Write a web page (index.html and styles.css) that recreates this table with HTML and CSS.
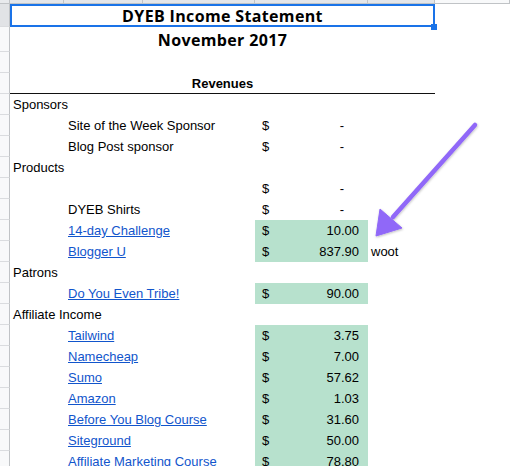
FILE: index.html
```html
<!DOCTYPE html>
<html>
<head>
<meta charset="utf-8">
<link rel="stylesheet" href="styles.css">
</head>
<body>
<div class="sheet">
  <div class="row hdr">
    <div class="rh corner"></div>
    <div class="ch sel"></div>
    <div class="ch sel"></div>
    <div class="ch sel"></div>
    <div class="ch sel"></div>
    <div class="ch sel"></div>
    <div class="ch"></div>
  </div>
  <div class="row r-title">
    <div class="rh selrow"></div>
    <div class="merged title">DYEB Income Statement</div>
    <div></div>
  </div>
  <div class="row r-month">
    <div class="rh"></div>
    <div class="merged title">November 2017</div>
    <div></div>
  </div>
  <div class="row">
    <div class="rh"></div>
  </div>
  <div class="row">
    <div class="rh"></div>
    <div class="merged rev">Revenues</div>
    <div></div>
  </div>
  <div class="row">
    <div class="rh"></div>
    <div class="b">Sponsors</div>
  </div>
  <div class="row">
    <div class="rh"></div><div></div>
    <div class="c">Site of the Week Sponsor</div>
    <div class="e"><span>$</span><span class="dash">-</span></div>
  </div>
  <div class="row">
    <div class="rh"></div><div></div>
    <div class="c">Blog Post sponsor</div>
    <div class="e"><span>$</span><span class="dash">-</span></div>
  </div>
  <div class="row">
    <div class="rh"></div>
    <div class="b">Products</div>
  </div>
  <div class="row">
    <div class="rh"></div><div></div><div class="c"></div>
    <div class="e"><span>$</span><span class="dash">-</span></div>
  </div>
  <div class="row">
    <div class="rh"></div><div></div>
    <div class="c">DYEB Shirts</div>
    <div class="e"><span>$</span><span class="dash">-</span></div>
  </div>
  <div class="row">
    <div class="rh"></div><div></div>
    <div class="c"><a href="#">14-day Challenge</a></div>
    <div class="e green"><span>$</span><span>10.00</span></div>
  </div>
  <div class="row">
    <div class="rh"></div><div></div>
    <div class="c"><a href="#">Blogger U</a></div>
    <div class="e green"><span>$</span><span>837.90</span></div>
    <div class="f">woot</div>
  </div>
  <div class="row">
    <div class="rh"></div>
    <div class="b">Patrons</div>
  </div>
  <div class="row">
    <div class="rh"></div><div></div>
    <div class="c"><a href="#">Do You Even Tribe!</a></div>
    <div class="e green"><span>$</span><span>90.00</span></div>
  </div>
  <div class="row">
    <div class="rh"></div>
    <div class="b wide">Affiliate Income</div>
  </div>
  <div class="row">
    <div class="rh"></div><div></div>
    <div class="c"><a href="#">Tailwind</a></div>
    <div class="e green"><span>$</span><span>3.75</span></div>
  </div>
  <div class="row">
    <div class="rh"></div><div></div>
    <div class="c"><a href="#">Namecheap</a></div>
    <div class="e green"><span>$</span><span>7.00</span></div>
  </div>
  <div class="row">
    <div class="rh"></div><div></div>
    <div class="c"><a href="#">Sumo</a></div>
    <div class="e green"><span>$</span><span>57.62</span></div>
  </div>
  <div class="row">
    <div class="rh"></div><div></div>
    <div class="c"><a href="#">Amazon</a></div>
    <div class="e green"><span>$</span><span>1.03</span></div>
  </div>
  <div class="row">
    <div class="rh"></div><div></div>
    <div class="c"><a href="#">Before You Blog Course</a></div>
    <div class="e green"><span>$</span><span>31.60</span></div>
  </div>
  <div class="row">
    <div class="rh"></div><div></div>
    <div class="c"><a href="#">Siteground</a></div>
    <div class="e green"><span>$</span><span>50.00</span></div>
  </div>
  <div class="row">
    <div class="rh"></div><div></div>
    <div class="c"><a href="#">Affiliate Marketing Course</a></div>
    <div class="e green"><span>$</span><span>78.80</span></div>
  </div>

  <div class="selection"><div class="handle"></div></div>
  <svg class="arrow" width="510" height="466" viewBox="0 0 510 466">
    <defs>
      <filter id="sh" x="-20%" y="-20%" width="140%" height="140%">
        <feDropShadow dx="0.5" dy="1" stdDeviation="1" flood-color="#000" flood-opacity="0.25"/>
      </filter>
    </defs>
    <g filter="url(#sh)" fill="#9068f8" stroke="#9068f8">
      <line x1="475" y1="125" x2="393" y2="217" stroke-width="4.5" stroke-linecap="round"/>
      <polygon points="376,236 380,209 402,228" stroke-width="1" stroke-linejoin="round"/>
    </g>
  </svg>
</div>
</body>
</html>
```

FILE: styles.css
```css
* { box-sizing: border-box; }
html, body {
  margin: 0;
  padding: 0;
  background: #fff;
  overflow: hidden;
}
body {
  font-family: "Liberation Sans", Arial, sans-serif;
  font-size: 13px;
  color: #000;
  width: 510px;
  height: 466px;
}
.sheet {
  position: relative;
  width: 510px;
  height: 466px;
  overflow: hidden;
}
.row {
  display: grid;
  grid-template-columns: 10px 54px 79px 112px 113px 67px 1fr;
  height: 21px;
  align-items: stretch;
}
.row > div {
  display: flex;
  align-items: center;
  white-space: nowrap;
  min-width: 0;
}
.hdr { height: 4px; }
.r-title { height: 23px; }
.r-month { height: 25px; }

.rh {
  background: #f8f9fa;
  border-right: 1px solid #c0c3c6;
  border-bottom: 1px solid #dadcdf;
  grid-column: 1;
}
.rh.selrow { background: #e1e3e6; }
.rh.corner { background: #e8eaed; border-bottom: 1px solid #c0c3c6; }
.ch {
  background: #f8f9fa;
  border-right: 1px solid #c0c3c6;
  border-bottom: 1px solid #c0c3c6;
}
.ch.sel { background: #e4e6e9; }

.merged {
  grid-column: 2 / 7;
  justify-content: center;
}
.title {
  font-family: "Open Sans", sans-serif;
  font-weight: 700;
  font-size: 16px;
  letter-spacing: 0.35px;
}
.rev {
  font-weight: 700;
  border-bottom: 1px solid #111;
  padding-top: 1px;
}
.b { grid-column: 2; padding-left: 3px; overflow: visible; }
.b.wide { grid-column: 2 / 4; }
.c { grid-column: 3 / 5; padding-left: 4px; }
.e {
  grid-column: 5;
  justify-content: space-between;
  padding: 0 9px 0 7px;
}
.e .dash { margin-right: 15px; }
.f { grid-column: 6; padding-left: 3px; }
.green { background: #b7e1cd; }

a {
  color: #1155cc;
  text-decoration: underline;
}

.selection {
  position: absolute;
  left: 10px;
  top: 4px;
  width: 425px;
  height: 23px;
  border: 2px solid #1a73e8;
  pointer-events: none;
}
.handle {
  position: absolute;
  right: -4px;
  bottom: -5px;
  width: 6px;
  height: 6px;
  background: #1a73e8;
}
.arrow {
  position: absolute;
  left: 0;
  top: 0;
  pointer-events: none;
}
```
